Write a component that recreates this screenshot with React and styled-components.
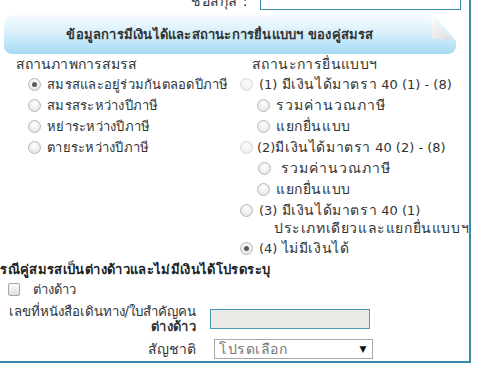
import React from "react";
import styled, { createGlobalStyle } from "styled-components";

const GlobalStyle = createGlobalStyle`
  html, body { margin: 0; padding: 0; background: #fff; }
  body {
    font-family: Tahoma, "DejaVu Sans", "Noto Sans", sans-serif;
    font-size: 13px;
    color: #333;
    overflow: hidden;
  }
`;

const Viewport = styled.div`
  width: 490px;
  height: 377px;
  overflow: hidden;
  position: relative;
`;

const Panel = styled.div`
  box-sizing: border-box;
  width: 481px;
  margin-left: -10px;
  margin-top: -18px;
  border: 2px solid #3a8cab;
  padding-bottom: 2px;
  background: #fff;
`;

const TopRow = styled.div`
  display: flex;
  align-items: flex-end;
  height: 21px;
  padding-top: 5px;
`;

const TopLabel = styled.div`
  width: 268px;
  box-sizing: border-box;
  text-align: right;
  padding-right: 12px;
  line-height: 18px;
  font-size: 14px;
  letter-spacing: 0.5px;
`;

const TopInput = styled.div`
  box-sizing: border-box;
  width: 201px;
  height: 21px;
  border: 1px solid #3a8cab;
  background: #fff;
`;

const Banner = styled.div`
  position: relative;
  box-sizing: border-box;
  margin: 5px 0 1px 12px;
  width: 452px;
  height: 39px;
  border-radius: 8px;
  background: linear-gradient(#f6fcff 0%, #d8f0fb 45%, #a6daf4 100%);
  clip-path: polygon(0 0, 430px 0, 452px 26px, 452px 100%, 0 100%);
  display: flex;
  align-items: center;
  justify-content: center;
  padding-right: 20px;
`;

const BannerTitle = styled.span`
  font-weight: bold;
  font-size: 13px;
  letter-spacing: 0.2px;
  color: #333;
`;

const Fold = styled.svg`
  position: absolute;
  right: 0;
  top: 0;
`;

const Columns = styled.div`
  display: grid;
  grid-template-columns: 224px 1fr;
  padding-left: 24px;
`;

const Column = styled.div`
  display: flex;
  flex-direction: column;
  min-width: 0;
`;

const ColTitle = styled.div`
  height: 19px;
  line-height: 19px;
  font-size: 14px;
  letter-spacing: ${(p) => p.$ls ?? 0.4}px;
  padding-left: ${(p) => p.$indent || 0}px;
`;

const OptionRow = styled.div`
  display: flex;
  align-items: flex-start;
  min-height: 21px;
  padding-left: ${(p) => p.$indent || 0}px;
`;

const OptionText = styled.div`
  line-height: 21px;
  font-size: ${(p) => p.$fs || 14}px;
  letter-spacing: ${(p) => p.$ls ?? 0.6}px;
  white-space: nowrap;
  margin-left: ${(p) => p.$gap || 6}px;
`;

const Num = styled.span`
  font-size: 13px;
  letter-spacing: 0;
`;

const SecondLine = styled.div`
  line-height: 19px;
  font-size: 14px;
  letter-spacing: 0.6px;
  white-space: nowrap;
  margin-top: -2px;
  padding-left: ${(p) => p.$indent || 0}px;
`;

const Radio = styled.span`
  flex: none;
  box-sizing: border-box;
  width: 13px;
  height: 13px;
  margin-top: 4px;
  border-radius: 50%;
  border: 1px solid ${(p) => (p.$disabled ? "#dadada" : "#b8b8b8")};
  background: ${(p) =>
    p.$disabled
      ? "radial-gradient(circle at 50% 35%, #fcfcfc, #ebebeb)"
      : "radial-gradient(circle at 50% 35%, #ffffff, #dedede)"};
  display: flex;
  align-items: center;
  justify-content: center;
  &::after {
    content: "";
    display: ${(p) => (p.$checked ? "block" : "none")};
    width: 5px;
    height: 5px;
    border-radius: 50%;
    background: #5a5a5a;
  }
`;

const Heading = styled.div`
  font-weight: bold;
  color: #222;
  line-height: 22px;
  letter-spacing: 0.35px;
  white-space: nowrap;
`;

const CheckRow = styled.div`
  display: flex;
  align-items: center;
  height: 17px;
  padding-left: 16px;
`;

const Check = styled.span`
  box-sizing: border-box;
  width: 12px;
  height: 13px;
  border: 1px solid #a6a6a6;
  border-radius: 2px;
  background: linear-gradient(#fdfdfd, #dedede);
`;

const CheckText = styled.span`
  margin-left: 13px;
`;

const FieldRow = styled.div`
  display: grid;
  grid-template-columns: 204px auto;
  column-gap: 14px;
  align-items: center;
  margin-top: ${(p) => p.$mt || 0}px;
`;

const FieldLabel = styled.div`
  text-align: right;
  line-height: 15px;
  font-size: ${(p) => p.$fs || 13.3}px;
  letter-spacing: ${(p) => p.$ls ?? 0}px;
  white-space: nowrap;
`;

const Strong = styled.span`
  font-weight: bold;
  font-size: 13px;
  letter-spacing: 0.3px;
`;

const TextBox = styled.div`
  box-sizing: border-box;
  width: 160px;
  height: 20px;
  border: 1px solid #4a9cb9;
  background: #e9e9e5;
`;

const Select = styled.div`
  box-sizing: border-box;
  width: 159px;
  height: 20px;
  margin-left: 4px;
  border: 1px solid #a9a9a9;
  background: #fff;
  display: flex;
  align-items: center;
  justify-content: space-between;
  padding: 0 5px 0 4px;
  color: #777;
  font-size: 14px;
  letter-spacing: 0.5px;
`;

const Arrow = styled.span`
  color: #111;
  font-size: 9px;
`;

const maritalOptions = [
  { label: "สมรสและอยู่ร่วมกันตลอดปีภาษี", checked: true },
  { label: "สมรสระหว่างปีภาษี" },
  { label: "หย่าระหว่างปีภาษี" },
  { label: "ตายระหว่างปีภาษี" },
];

export default function App() {
  return (
    <Viewport>
      <GlobalStyle />
      <Panel>
        <TopRow>
          <TopLabel>ชื่อสกุล :</TopLabel>
          <TopInput />
        </TopRow>
        <Banner>
          <BannerTitle>ข้อมูลการมีเงินได้และสถานะการยื่นแบบฯ ของคู่สมรส</BannerTitle>
          <Fold width="26" height="28" viewBox="0 0 26 28">
            <defs>
              <linearGradient id="fg" x1="0" y1="0" x2="1" y2="1">
                <stop offset="0" stopColor="#ffffff" />
                <stop offset="1" stopColor="#d9d9d9" />
              </linearGradient>
            </defs>
            <path d="M2 0 Q1 12 2 24 Q12 24 22 25 Q10 14 2 0 Z" fill="url(#fg)" />
          </Fold>
        </Banner>
        <Columns>
          <Column>
            <ColTitle $ls={0.1}>สถานภาพการสมรส</ColTitle>
            {maritalOptions.map((o) => (
              <OptionRow $indent={12} key={o.label}>
                <Radio $checked={o.checked} />
                <OptionText $fs={13} $ls={0.25}>{o.label}</OptionText>
              </OptionRow>
            ))}
          </Column>
          <Column>
            <ColTitle $indent={12}>สถานะการยื่นแบบฯ</ColTitle>
            <OptionRow>
              <Radio $disabled />
              <OptionText $gap={6}>
                <Num>(1) </Num>มีเงินได้มาตรา<Num> 40 (1) - (8)</Num>
              </OptionText>
            </OptionRow>
            <OptionRow $indent={17}>
              <Radio />
              <OptionText $gap={6} $ls={1}>รวมค่านวณภาษี</OptionText>
            </OptionRow>
            <OptionRow $indent={17}>
              <Radio />
              <OptionText $gap={6}>แยกยื่นแบบ</OptionText>
            </OptionRow>
            <OptionRow>
              <Radio $disabled />
              <OptionText $gap={4}>
                <Num>(2)</Num>มีเงินได้มาตรา<Num> 40 (2) - (8)</Num>
              </OptionText>
            </OptionRow>
            <OptionRow $indent={18}>
              <Radio />
              <OptionText $gap={10} $ls={1}>รวมค่านวณภาษี</OptionText>
            </OptionRow>
            <OptionRow $indent={17}>
              <Radio />
              <OptionText $gap={6}>แยกยื่นแบบ</OptionText>
            </OptionRow>
            <OptionRow>
              <Radio />
              <OptionText $gap={6}>
                <Num>(3) </Num>มีเงินได้มาตรา<Num> 40 (1)</Num>
              </OptionText>
            </OptionRow>
            <SecondLine $indent={34}>ประเภทเดียวและแยกยื่นแบบฯ</SecondLine>
            <OptionRow>
              <Radio $checked />
              <OptionText $gap={6}>
                <Num>(4) </Num>ไม่มีเงินได้
              </OptionText>
            </OptionRow>
          </Column>
        </Columns>
        <Heading>กรณีคู่สมรสเป็นต่างด้าวและไม่มีเงินได้โปรดระบุ</Heading>
        <CheckRow>
          <Check />
          <CheckText>ต่างด้าว</CheckText>
        </CheckRow>
        <FieldRow $mt={6}>
          <FieldLabel>
            เลขที่หนังสือเดินทาง/ใบสำคัญคน
            <br />
            <Strong>ต่างด้าว</Strong>
          </FieldLabel>
          <TextBox />
        </FieldRow>
        <FieldRow $mt={5}>
          <FieldLabel $fs={14} $ls={0.1}>สัญชาติ</FieldLabel>
          <Select>
            โปรดเลือก
            <Arrow>▼</Arrow>
          </Select>
        </FieldRow>
      </Panel>
    </Viewport>
  );
}
